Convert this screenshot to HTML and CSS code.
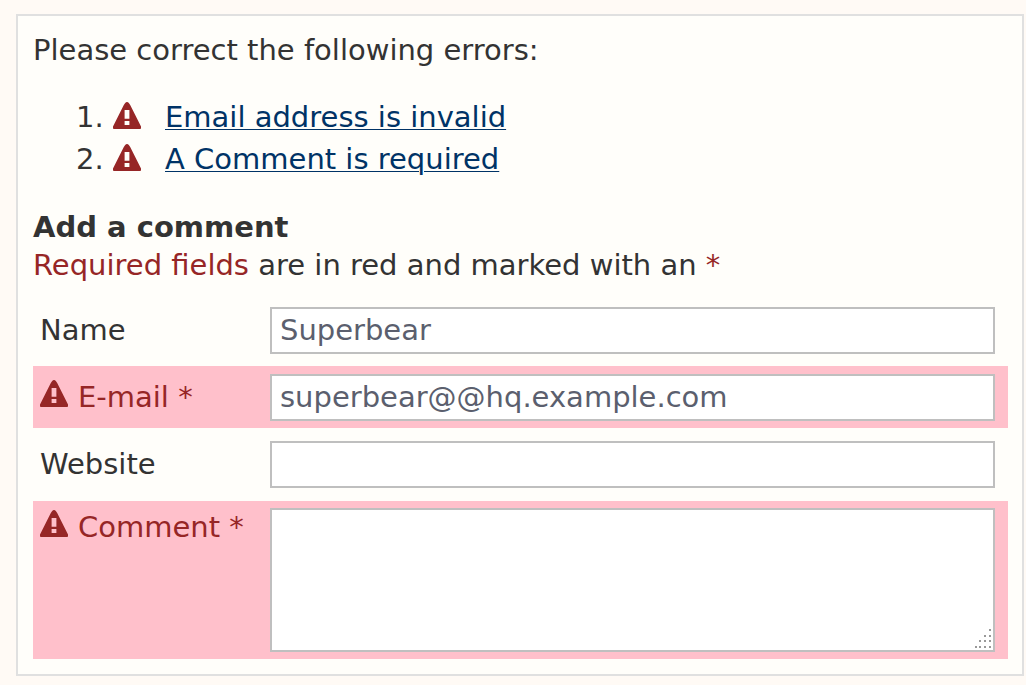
FILE: index.html
```html
<!DOCTYPE html>
<html lang="en">
<head>
<meta charset="utf-8">
<meta name="viewport" content="width=device-width, initial-scale=1">
<title>Add a comment</title>
<link rel="stylesheet" href="styles.css">
</head>
<body>
<svg class="symbols" width="0" height="0" aria-hidden="true">
  <symbol id="warning" viewBox="0 0 28 27">
    <path fill="#962626" fill-rule="evenodd" d="M12 1.2Q14-1 16 1.2L17.2 3 28 24.6Q28.6 27 27 27H1Q-.6 27 0 24.6L10.8 3ZM11.6 8v8.8h4.8V8ZM11.6 19v4h4.8v-4Z"/>
  </symbol>
</svg>
<main class="panel">
  <section class="errors">
    <p class="intro">Please correct the following errors:</p>
    <ol class="error-list">
      <li><svg class="warning" aria-hidden="true"><use href="#warning"/></svg><a href="#email">Email address is invalid</a></li>
      <li><svg class="warning" aria-hidden="true"><use href="#warning"/></svg><a href="#comment">A Comment is required</a></li>
    </ol>
  </section>
  <form class="form">
    <h1 class="title">Add a comment</h1>
    <p class="hint"><span class="required">Required fields</span> are in red and marked with an <span class="required">*</span></p>
    <div class="row">
      <label class="label" for="name">Name</label>
      <input class="field" id="name" type="text" value="Superbear">
    </div>
    <div class="row row-error">
      <label class="label" for="email"><svg class="warning" aria-hidden="true"><use href="#warning"/></svg>E-mail *</label>
      <input class="field" id="email" type="text" value="superbear@@hq.example.com">
    </div>
    <div class="row">
      <label class="label" for="website">Website</label>
      <input class="field" id="website" type="text">
    </div>
    <div class="row row-error row-comment">
      <label class="label" for="comment"><svg class="warning" aria-hidden="true"><use href="#warning"/></svg>Comment *</label>
      <div class="area">
        <textarea class="field" id="comment"></textarea>
        <svg class="grip" viewBox="0 0 18 20" aria-hidden="true">
          <g fill="#999"><path d="M15 0h2v2h-2zM10 6h2v2h-2zM15 6h2v2h-2zM5 11h2v2H5zM10 11h2v2h-2zM15 11h2v2h-2zM1 17h2v2H1zM5 17h2v2H5zM10 17h2v2h-2zM15 17h2v2h-2z"/></g>
        </svg>
      </div>
    </div>
  </form>
</main>
</body>
</html>
```
FILE: styles.css
```css
* {
  box-sizing: border-box;
}

body {
  margin: 0;
  padding: 14px 2px 8px 16px;
  background: #fffaf5;
  color: #333;
  font: 29px/38px "DejaVu Sans", sans-serif;
}

.symbols {
  display: block;
}

.panel {
  padding: 15px 14px 15px 15px;
  border: 2px solid #e0e0e0;
  background: #fffefa;
}

.intro,
.hint,
.title {
  margin: 0;
  font-size: 29px;
}

.error-list {
  margin: 27px 0 28px;
  padding-left: 80px;
  line-height: 42px;
}

.error-list .warning {
  vertical-align: -2px;
}

.error-list a {
  margin-left: 24px;
  color: #036;
  text-decoration: underline;
  text-decoration-thickness: 1px;
  text-underline-offset: 2px;
}

.warning {
  width: 28px;
  height: 27px;
  flex: none;
}

.required {
  color: #962626;
}

.hint {
  margin-bottom: 15px;
}

.row {
  display: flex;
  align-items: center;
  margin-top: 5px;
  padding: 8px 13px 7px 7px;
}

.row-error {
  background: #ffc0cb;
  color: #962626;
}

.label {
  display: flex;
  align-items: flex-start;
  gap: 10px;
  flex: 0 0 230px;
  padding-bottom: 2px;
}

.label .warning {
  margin-top: 2px;
}

.row-comment {
  align-items: flex-start;
  margin-top: 6px;
  padding-top: 7px;
}

.field {
  flex: 1;
  min-width: 0;
  height: 47px;
  margin: 0;
  padding: 0 8px 2px;
  border: 2px solid #bfbfbf;
  border-radius: 0;
  background: #fff;
  color: #5b5f6e;
  font: inherit;
}

.area {
  position: relative;
  display: flex;
  flex: 1;
}

.area .field {
  height: 144px;
  resize: none;
}

.grip {
  position: absolute;
  right: 3px;
  bottom: 3px;
  width: 18px;
  height: 20px;
}
```
